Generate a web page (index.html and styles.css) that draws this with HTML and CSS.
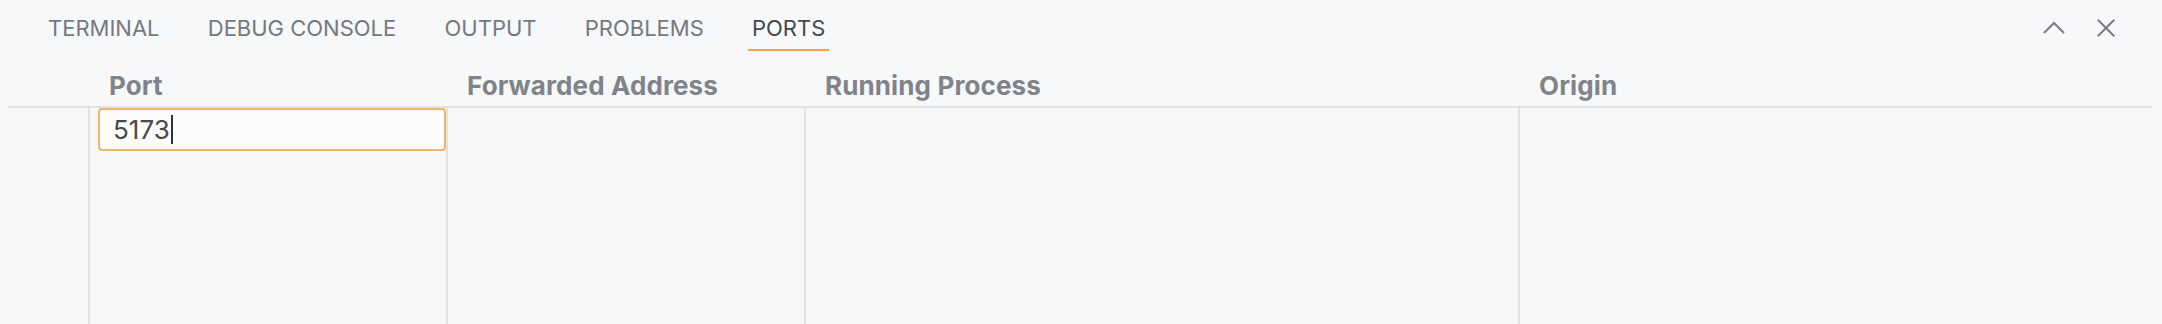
FILE: index.html
```html
<!DOCTYPE html>
<html lang="en">
<head>
<meta charset="utf-8">
<title>Ports</title>
<link rel="stylesheet" href="styles.css">
</head>
<body>
<div class="panel">
  <div class="tabbar">
    <div class="tabs">
      <div class="tab">TERMINAL</div>
      <div class="tab">DEBUG CONSOLE</div>
      <div class="tab">OUTPUT</div>
      <div class="tab">PROBLEMS</div>
      <div class="tab active">PORTS</div>
    </div>
    <div class="actions">
      <svg class="icon" viewBox="0 0 16 16" width="32" height="32"><path d="M3 10.5 L8 5.5 L13 10.5"/></svg>
      <svg class="icon" viewBox="0 0 16 16" width="32" height="32"><path d="M3.85 3.85 L12.15 12.15 M12.15 3.85 L3.85 12.15"/></svg>
    </div>
  </div>
  <div class="table">
    <div class="head"></div>
    <div class="head">Port</div>
    <div class="head">Forwarded Address</div>
    <div class="head">Running Process</div>
    <div class="head">Origin</div>
    <div class="cell first"></div>
    <div class="cell col"><div class="field">5173<span class="caret"></span></div></div>
    <div class="cell col"></div>
    <div class="cell col"></div>
    <div class="cell col"></div>
  </div>
</div>
</body>
</html>
```

FILE: styles.css
```css
html, body {
  margin: 0;
  padding: 0;
  background: #f7f8fa;
}
body {
  width: 2162px;
  height: 324px;
  overflow: hidden;
  font-family: Inter, "Noto Sans", sans-serif;
}
.panel {
  display: flex;
  flex-direction: column;
  height: 324px;
}
.tabbar {
  display: flex;
  align-items: flex-start;
  height: 51px;
  padding: 0 40px 0 44px;
}
.tabs {
  display: flex;
  gap: 40.2px;
}
.tab {
  font-size: 22px;
  line-height: 22px;
  padding: 17px 4px 10px;
  color: #75797f;
  border-bottom: 2px solid transparent;
}
.tab.active {
  color: #46484d;
  border-bottom-color: #f2a540;
}
.actions {
  margin-left: auto;
  display: flex;
  gap: 20px;
  padding-top: 12px;
}
.icon {
  display: block;
  fill: none;
  stroke: #7a7d83;
  stroke-width: 1;
}
.table {
  margin: 0 10px 0 8px;
  display: grid;
  grid-template-columns: 80px 358px 358px 714px 634px;
  grid-template-rows: 57px 1fr;
  flex: 1;
}
.head {
  font-size: 26px;
  line-height: 26px;
  font-weight: 700;
  letter-spacing: 0.12px;
  color: #80848a;
  padding: 21.5px 0 7.5px 21px;
  border-bottom: 2px solid #e2e3e5;
  white-space: nowrap;
}
.cell.col {
  border-left: 2px solid #e2e3e5;
}
.field {
  margin-left: 8px;
  height: 39px;
  border: 2px solid #efb467;
  border-radius: 4px;
  background: #fcfcfc;
  font-size: 26px;
  line-height: 39px;
  color: #47494d;
  padding-left: 13px;
  display: flex;
  align-items: center;
}
.caret {
  display: inline-block;
  width: 2px;
  height: 29px;
  margin-left: 1px;
  background: #2f3134;
}
```
